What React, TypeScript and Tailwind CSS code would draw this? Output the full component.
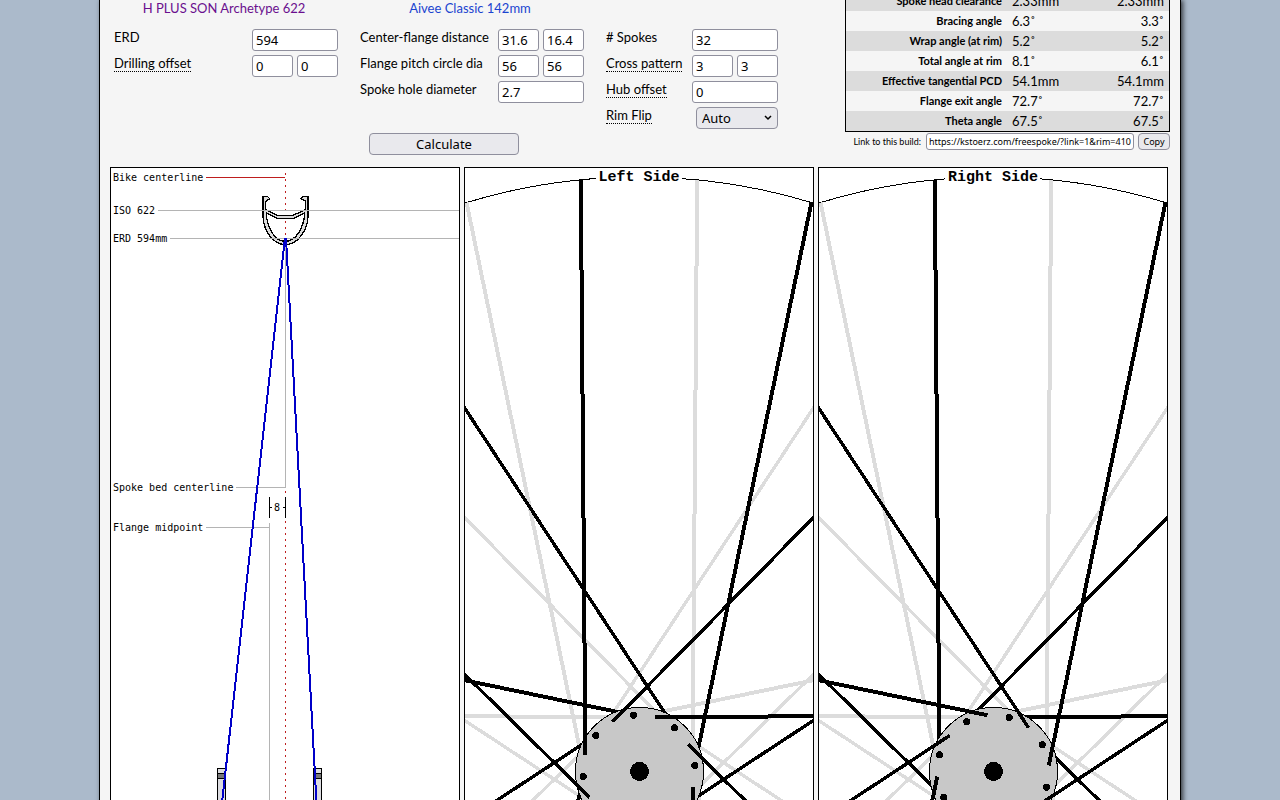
import type { ReactNode } from "react";

const field =
  "h-[22px] min-w-0 rounded-[3px] border border-[#8f8f9d] bg-white px-[3px] font-['Noto_Sans',sans-serif] text-[13px] text-black";

const rad = (deg: number) => (deg * Math.PI) / 180;
const CX = 175;
const CY = 604;
const RIM_RADIUS = 594;
const HOLE_RADIUS = 56;

const polar = (radius: number, deg: number) => ({
  x: CX + radius * Math.sin(rad(deg)),
  y: CY - radius * Math.cos(rad(deg)),
});

const EIGHTS = [0, 1, 2, 3, 4, 5, 6, 7];
const trailing = EIGHTS.map((k) => ({ rim: -5.625 + 45 * k, hole: -73.125 + 45 * k }));
const leading = EIGHTS.map((k) => ({ rim: 16.875 + 45 * k, hole: 84.375 + 45 * k }));

type SpokeSpec = { rim: number; hole: number };

function Spoke({ rim, hole, color }: SpokeSpec & { color: string }) {
  const a = polar(RIM_RADIUS, rim);
  const b = polar(HOLE_RADIUS, hole);
  const dx = Math.abs(a.x - b.x);
  const dy = Math.abs(a.y - b.y);
  const width = Math.max(3.4, (4 * Math.max(dx, dy)) / Math.hypot(dx, dy));
  return <line x1={a.x} y1={a.y} x2={b.x} y2={b.y} stroke={color} strokeWidth={width} />;
}

function WheelSide({ title, front, back }: { title: string; front: SpokeSpec[]; back: SpokeSpec[] }) {
  const half = (title.length * 9) / 2;
  return (
    <svg viewBox="0 0 348 650" className="block w-full" role="img" aria-label={title}>
      <g transform="translate(-1 -1)" shapeRendering="crispEdges">
        <circle cx={CX} cy={CY} r={RIM_RADIUS} fill="none" stroke="#000" />
        {[...front, ...back].map((s) => (
          <Spoke key={s.rim} rim={-s.rim} hole={-s.hole} color="#dcdcdc" />
        ))}
        {back.map((s) => (
          <Spoke key={s.rim} {...s} color="#000" />
        ))}
        <circle cx={CX + 0.5} cy={CY + 0.5} r={64} fill="#c8c8c8" stroke="#000" />
        {front.map((s) => (
          <Spoke key={s.rim} {...s} color="#000" />
        ))}
        {back.map((s) => {
          const p = polar(HOLE_RADIUS, s.hole);
          return <circle key={s.hole} cx={p.x} cy={p.y} r={3.5} />;
        })}
        <circle cx={CX + 0.5} cy={CY + 0.5} r={9.5} />
        <rect x={CX - half - 3} y={2} width={half * 2 + 5} height={14} fill="#fff" />
      </g>
      <text
        x={CX - 1}
        y={13}
        textAnchor="middle"
        className="font-['Liberation_Mono',monospace] text-[15px] font-bold"
      >
        {title}
      </text>
    </svg>
  );
}

function Cutaway() {
  return (
    <svg viewBox="111 168 348 650" className="block w-full" role="img" aria-label="Wheel cross-section">
      <g shapeRendering="crispEdges" fill="none">
        <path d="M206 177.5H285" stroke="#be1e1e" />
        <path d="M285.5 173V820" stroke="#be1e1e" strokeDasharray="2 4" />
        <g transform="translate(245 185) scale(0.33333)" stroke="#000" strokeWidth="4">
          <path
            fillRule="evenodd"
            fill="#dcdcdc"
            d="M54 35H68L74 41L65 47L62 49V74L98 91H144L182 74V49L178 46L168 41L174 35H189V95C187 138 157 179 121 179C85 179 56 138 54 95ZM64 84C65 126 88 169 121 169C154 169 177 126 179 84L146 100H96Z"
          />
        </g>
        <path d="M158 210.5H460M170 238.5H460M285.5 245V488M236 487.5H285M206 527.5H269M269.5 523V820" stroke="#b4b4b4" />
        <path d="M269.5 497V518M285.5 497V518M270 507.5H272M283 507.5H285" stroke="#000" />
        <path d="M217.5 768.5H225.5V820H217.5ZM313.5 768.5H321.5V820H313.5Z" fill="#dcdce0" stroke="#000" />
        <path d="M217.5 773.5H225.5V778.5H217.5ZM313.5 773.5H321.5V778.5H313.5Z" fill="#787878" stroke="#000" />
        <path d="M285 238L222 803M286 238L316.500 803" stroke="#0000c8" strokeWidth="2" />
      </g>
      <g className="font-['DejaVu_Sans_Mono',monospace] text-[10px]">
        <text x="113" y="181">Bike centerline</text>
        <text x="113" y="214">ISO 622</text>
        <text x="113" y="242">ERD 594mm</text>
        <text x="113" y="491">Spoke bed centerline</text>
        <text x="113" y="531">Flange midpoint</text>
        <text x="274" y="511">8</text>
      </g>
    </svg>
  );
}

function Row({ label, help, ids, values }: { label: string; help?: boolean; ids: string[]; values: string[] }) {
  return (
    <>
      <FieldLabel id={ids[0]} help={help}>{label}</FieldLabel>
      <div className="flex gap-1">
        {ids.map((id, i) => (
          <input
            key={id}
            id={id}
            aria-label={i > 0 ? `${label}, right` : undefined}
            defaultValue={values[i]}
            className={`${field} w-full flex-1`}
          />
        ))}
      </div>
    </>
  );
}

function FieldLabel({ id, help, children }: { id: string; help?: boolean; children: ReactNode }) {
  return (
    <div className="leading-[16px]">
      <label
        htmlFor={id}
        className={
          help
            ? "inline-block border-b border-dotted border-black leading-[16px] whitespace-nowrap"
            : "inline-block leading-[16px] whitespace-nowrap"
        }
      >
        {children}
      </label>
    </div>
  );
}

const results = [
  ["Spoke head clearance", "2.33mm", "2.33mm"],
  ["Bracing angle", "6.3˚", "3.3˚"],
  ["Wrap angle (at rim)", "5.2˚", "5.2˚"],
  ["Total angle at rim", "8.1˚", "6.1˚"],
  ["Effective tangential PCD", "54.1mm", "54.1mm"],
  ["Flange exit angle", "72.7˚", "72.7˚"],
  ["Theta angle", "67.5˚", "67.5˚"],
];

const column = "grid auto-rows-[26px] content-start";

export default function App() {
  return (
    <div className="h-screen overflow-hidden bg-[#abbacb] font-['Lato',sans-serif] text-[13px] text-black">
      <main className="mx-auto min-h-full max-w-[1082px] border-x border-black bg-[#f5f5f5] px-[10px] shadow-[2px_0_5px_rgba(0,0,0,0.7)]">
        <div className="flex h-[167px] items-start justify-between">
          <form className="w-[668px] pl-1" onSubmit={(e) => e.preventDefault()}>
            <div className="grid grid-cols-[224px_224px_172px] gap-x-[22px]">
              <a href="#rim" className="-ml-1 block h-[29px] text-center leading-[16px] text-[#6a0f8e]">
                H PLUS SON Archetype 622
              </a>
              <a href="#hub" className="-ml-1 block h-[29px] text-center leading-[16px] text-[#1a44d0]">
                Aivee Classic 142mm
              </a>
              <span />
              <div className={`${column} grid-cols-[138px_86px]`}>
                <Row label="ERD" ids={["erd"]} values={["594"]} />
                <Row label="Drilling offset" help ids={["drill-l", "drill-r"]} values={["0", "0"]} />
              </div>
              <div className={`${column} grid-cols-[138px_86px]`}>
                <Row label="Center-flange distance" ids={["cf-l", "cf-r"]} values={["31.6", "16.4"]} />
                <Row label="Flange pitch circle dia" ids={["pcd-l", "pcd-r"]} values={["56", "56"]} />
                <Row label="Spoke hole diameter" ids={["hole"]} values={["2.7"]} />
              </div>
              <div className={`${column} grid-cols-[86px_86px]`}>
                <Row label="# Spokes" ids={["spokes"]} values={["32"]} />
                <Row label="Cross pattern" help ids={["cross-l", "cross-r"]} values={["3", "3"]} />
                <Row label="Hub offset" help ids={["hub-offset"]} values={["0"]} />
                <FieldLabel id="flip" help>Rim Flip</FieldLabel>
                <div className="relative ml-1 h-[22px]">
                  <select
                    id="flip"
                    className="h-[22px] w-full appearance-none rounded-[4px] border border-[#8f8f9d] bg-[#e9e9ed] pl-[5px] font-['Noto_Sans',sans-serif] text-[13px] leading-[18px]"
                  >
                    <option>Auto</option>
                    <option>Yes</option>
                    <option>No</option>
                  </select>
                  <svg className="pointer-events-none absolute top-[8px] right-[6px]" width="8" height="6" viewBox="0 0 8 6">
                    <path d="M1 1L4 4L7 1" fill="none" stroke="#000" strokeWidth="1.500" />
                  </svg>
                </div>
              </div>
            </div>
            <div className="-ml-1 flex justify-center">
              <button className="h-[22px] w-[150px] rounded-[4px] border border-[#8f8f9d] bg-[#e9e9ed] font-['Noto_Sans',sans-serif] text-[13px] leading-[18px]">
                Calculate
              </button>
            </div>
          </form>
          <aside className="-mt-[10px] w-[325px]">
            <table className="w-full border-separate border-spacing-0 border border-black">
              <tbody>
                {results.map(([name, left, right]) => (
                  <tr key={name} className="h-[20px] odd:bg-[#dcdcdc]">
                    <th className="w-[161px] p-0 pr-[5px] text-right text-[11px] leading-[20px] font-bold whitespace-nowrap">{name}</th>
                    <td className="p-0 pl-[5px] leading-[20px]">{left}</td>
                    <td className="p-0 pr-[5px] text-right leading-[20px]">{right}</td>
                  </tr>
                ))}
              </tbody>
            </table>
            <div className="mt-px flex items-center justify-end text-[9px]">
              <label htmlFor="link" className="mr-[5px] whitespace-nowrap">Link to this build:</label>
              <input
                id="link"
                readOnly
                defaultValue="https://kstoerz.com/freespoke/?link=1&rim=4108"
                className="mr-1 h-[17px] w-[208px] rounded-[3px] border border-[#8f8f9d] bg-white px-[2px] font-['Noto_Sans',sans-serif]"
              />
              <button className="h-[17px] w-8 rounded-[4px] border border-[#8f8f9d] bg-[#e9e9ed] font-['Noto_Sans',sans-serif] leading-[15px]">
                Copy
              </button>
            </div>
          </aside>
        </div>
        <div className="mr-[2px] grid grid-cols-3 gap-1">
          <div className="border border-black bg-white"><Cutaway /></div>
          <div className="border border-black bg-white"><WheelSide title="Left Side" front={trailing} back={leading} /></div>
          <div className="border border-black bg-white"><WheelSide title="Right Side" front={leading} back={trailing} /></div>
        </div>
      </main>
    </div>
  );
}
